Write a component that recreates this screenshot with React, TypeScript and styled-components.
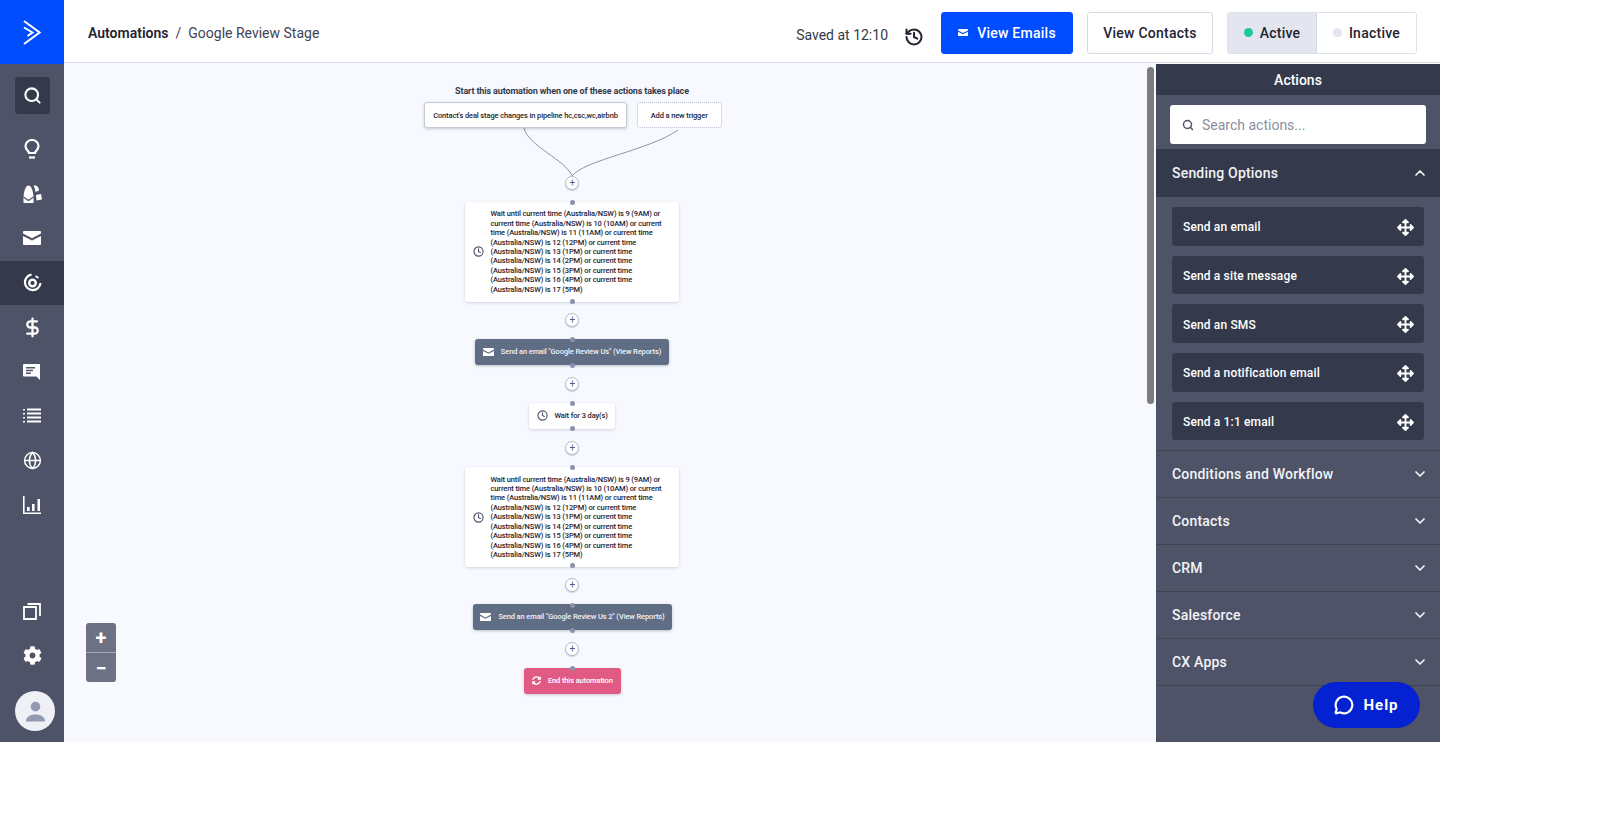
import { ReactNode } from "react";
import styled, { createGlobalStyle } from "styled-components";
import { ChevronDown, ChevronUp, Clock, DollarSign, Globe, History, MessageCircle, Search } from "lucide-react";
import { FaArrowsAlt, FaCog, FaSyncAlt } from "react-icons/fa";

const GlobalStyle = createGlobalStyle`
  html, body {
    margin: 0;
    padding: 0;
    background: #fff;
    font-family: Roboto, "Liberation Sans", sans-serif;
  }
  * { box-sizing: border-box; }
`;

const Shell = styled.div`
  display: flex;
  width: 1440px;
  height: 742px;
  overflow: hidden;
`;

const Nav = styled.nav`
  width: 64px;
  flex: none;
  display: flex;
  flex-direction: column;
  background: #4e5367;
  color: #fff;
`;
const Logo = styled.div`
  height: 64px;
  flex: none;
  background: #004cff;
  display: flex;
  align-items: center;
  justify-content: center;
`;
const NavItem = styled.div<{ $active?: boolean }>`
  height: 44.5px;
  flex: none;
  display: flex;
  align-items: center;
  justify-content: center;
  background: ${(p) => (p.$active ? "#343a4b" : "transparent")};
`;
const SearchBox = styled.div`
  width: 35px;
  height: 37px;
  flex: none;
  margin: 13px 0 13px 15px;
  border-radius: 3px;
  background: #343a4b;
  display: flex;
  align-items: center;
  justify-content: center;
`;
const NavSpacer = styled.div`
  flex: 1;
`;
const Avatar = styled.div`
  width: 40px;
  height: 40px;
  flex: none;
  margin: 13px 0 11px 15px;
  border-radius: 50%;
  background: #eef0f6;
  display: flex;
  align-items: center;
  justify-content: center;
`;

const Main = styled.div`
  flex: 1;
  display: flex;
  flex-direction: column;
  min-width: 0;
`;
const TopBar = styled.header`
  height: 63px;
  flex: none;
  display: flex;
  align-items: center;
  padding: 3px 23px 0 24px;
  border-bottom: 1px solid #d6dbe8;
  background: #fff;
`;
const Crumbs = styled.div`
  flex: 1;
  font-size: 14px;
  color: #3f4454;
`;
const CrumbRoot = styled.b`
  font-weight: 600;
  color: #1f2430;
`;
const CrumbSlash = styled.span`
  margin: 0 7px;
`;
const Saved = styled.span`
  font-size: 14px;
  color: #343a4b;
  margin: 4px 16px 0 0;
`;
const HistoryIcon = styled.span`
  display: flex;
  margin: 8px 17px 0 0;
  color: #1f2430;
`;
const Button = styled.button<{ $primary?: boolean }>`
  height: 42px;
  margin-right: 14px;
  padding: 0;
  display: flex;
  align-items: center;
  justify-content: center;
  gap: 9px;
  font: 500 14px Roboto, sans-serif;
  letter-spacing: 0.25px;
  border-radius: 3px;
  width: ${(p) => (p.$primary ? "132px" : "126px")};
  color: ${(p) => (p.$primary ? "#fff" : "#1f2430")};
  background: ${(p) => (p.$primary ? "#004cff" : "#fff")};
  border: 1px solid ${(p) => (p.$primary ? "#004cff" : "#d6dbe8")};
`;
const Toggle = styled.div`
  display: flex;
  height: 42px;
  border: 1px solid #dde1ec;
  border-radius: 3px;
  overflow: hidden;
`;
const ToggleOption = styled.div<{ $on?: boolean }>`
  display: flex;
  align-items: center;
  justify-content: center;
  gap: 7px;
  font-size: 14px;
  font-weight: 500;
  letter-spacing: 0.25px;
  color: #1f2430;
  width: ${(p) => (p.$on ? "89px" : "99px")};
  background: ${(p) => (p.$on ? "#e3e6ef" : "#fff")};
  border-right: ${(p) => (p.$on ? "1px solid #d6dbe8" : "none")};
`;
const Dot = styled.i<{ $on?: boolean }>`
  width: 9px;
  height: 9px;
  border-radius: 50%;
  background: ${(p) => (p.$on ? "#1fc9a0" : "#e3e6ef")};
`;

const Body = styled.div`
  flex: 1;
  display: flex;
  min-height: 0;
`;
const Canvas = styled.div`
  position: relative;
  flex: 1;
  background: #f7f9fe;
`;
const Wires = styled.svg`
  position: absolute;
  left: 0;
  top: 0;
`;
const Scrollbar = styled.div`
  position: absolute;
  left: 1083px;
  top: 4px;
  width: 7px;
  height: 337px;
  border-radius: 4px;
  background: #7b7b7b;
`;
const TriggerTitle = styled.div`
  position: absolute;
  left: 308px;
  top: 23px;
  width: 400px;
  text-align: center;
  font-size: 9px;
  font-weight: 700;
  letter-spacing: -0.14px;
  color: #343a4b;
`;
// x and y are page coordinates of the node on the diagram
const Node = styled.div<{ $x: number; $y: number; $w: number; $h: number }>`
  position: absolute;
  left: ${(p) => p.$x - 64}px;
  top: ${(p) => p.$y - 63}px;
  width: ${(p) => p.$w}px;
  height: ${(p) => p.$h}px;
  display: flex;
  align-items: center;
  border-radius: 3px;
  font-size: 7.5px;
  font-weight: 500;
  letter-spacing: -0.12px;
  line-height: 9.4px;
  white-space: nowrap;
  svg {
    flex: none;
  }
`;
const TriggerCard = styled(Node)`
  justify-content: center;
  background: #fff;
  border: 1px solid #c5c9d6;
  box-shadow: 0 1px 3px rgba(52, 58, 75, 0.25);
  color: #1f2430;
`;
const AddTrigger = styled(Node)`
  justify-content: center;
  background: #fff;
  border: 1px dotted #b6bacb;
  color: #1f2430;
`;
const WaitCard = styled(Node)`
  background: #fff;
  box-shadow: 0 1px 3px rgba(52, 58, 75, 0.2);
  color: #1f2430;
  padding-left: 7.5px;
  gap: 7px;
`;
const EmailCard = styled(Node)`
  justify-content: center;
  gap: 7px;
  background: #5f6d85;
  color: #f0f2f7;
  box-shadow: 0 1px 3px rgba(52, 58, 75, 0.3);
`;
const EndCard = styled(Node)`
  justify-content: center;
  gap: 7px;
  background: #e05a84;
  color: #fff;
  box-shadow: 0 1px 3px rgba(52, 58, 75, 0.25);
`;
const Pin = styled.i<{ $y: number }>`
  position: absolute;
  left: 505.8px;
  top: ${(p) => p.$y - 65.5}px;
  width: 5px;
  height: 5px;
  border-radius: 50%;
  background: #8b91ab;
`;
const AddStep = styled.div<{ $y: number }>`
  position: absolute;
  left: 501.3px;
  top: ${(p) => p.$y - 70}px;
  width: 14px;
  height: 14px;
  border-radius: 50%;
  background: #fff;
  border: 1px solid #b6bacb;
  box-shadow: 0 1px 1px rgba(52, 58, 75, 0.2);
  color: #5a6074;
  font-size: 10px;
  line-height: 11px;
  text-align: center;
`;
const ZoomControl = styled.div`
  position: absolute;
  left: 22px;
  top: 560px;
  width: 30px;
  border-radius: 3px;
  overflow: hidden;
  background: #6c7183;
`;
const ZoomButton = styled.div<{ $first?: boolean }>`
  height: 29.5px;
  padding-top: 2px;
  display: flex;
  align-items: center;
  justify-content: center;
  color: #fff;
  font-size: 20px;
  font-weight: 700;
  border-bottom: ${(p) => (p.$first ? "1px solid #a6aab8" : "none")};
`;

const Panel = styled.aside`
  width: 284px;
  flex: none;
  margin-top: 1px;
  position: relative;
  background: #4e5367;
  color: #fff;
`;
const PanelTitle = styled.div`
  height: 31px;
  padding-top: 1px;
  display: flex;
  align-items: center;
  justify-content: center;
  background: #343a4b;
  font-size: 14px;
  font-weight: 500;
`;
const SearchWrap = styled.div`
  height: 54px;
  padding: 10px 14px 5px;
`;
const SearchInput = styled.div`
  height: 39px;
  border-radius: 3px;
  background: #fff;
  display: flex;
  align-items: center;
  gap: 8px;
  padding-left: 12px;
  font-size: 14px;
  color: #8a8f9f;
`;
const GroupHead = styled.div<{ $open?: boolean }>`
  height: ${(p) => (p.$open ? "48px" : "47px")};
  display: flex;
  align-items: center;
  justify-content: space-between;
  padding: 0 12px 0 16px;
  font-size: 14px;
  font-weight: 500;
  letter-spacing: 0.2px;
  color: #f2f3f7;
  background: ${(p) => (p.$open ? "#343a4b" : "transparent")};
  border-bottom: ${(p) => (p.$open ? "none" : "1px solid #3f4456")};
`;
const GroupItems = styled.div`
  display: flex;
  flex-direction: column;
  gap: 10px;
  padding: 10px 16px 0;
  height: 254px;
  border-bottom: 1px solid #3f4456;
`;
const ActionRow = styled.div`
  height: 38.7px;
  flex: none;
  border-radius: 3px;
  background: #343a4b;
  display: flex;
  align-items: center;
  justify-content: space-between;
  padding: 2px 10px 0 11px;
  font-size: 12px;
  font-weight: 500;
  letter-spacing: 0.15px;
`;
const HelpButton = styled.div`
  position: absolute;
  left: 157px;
  top: 618px;
  width: 107px;
  height: 46px;
  border-radius: 23px;
  background: #0421d2;
  display: flex;
  align-items: center;
  justify-content: center;
  gap: 9px;
  font-size: 15px;
  font-weight: 700;
  letter-spacing: 1px;
`;

const LogoMark = () => (
  <svg width="18" height="25" viewBox="0 0 18 25" fill="none" stroke="#fff" strokeWidth="2">
    <path d="M1 1l15.500 11.500L1 24M1 7.500l8.500 5-5 3.500" />
  </svg>
);
const MailGlyph = ({ size = 18 }: { size?: number }) => (
  <svg width={size} height={(size * 14) / 18} viewBox="0 0 18 14" fill="#fff">
    <path d="M1 0h16a1 1 0 0 1 1 1v1.600l-9 4.600-9-4.600V1a1 1 0 0 1 1-1z" />
    <path d="M0 5l9 4.600L18 5v8a1 1 0 0 1-1 1H1a1 1 0 0 1-1-1z" />
  </svg>
);
const BulbGlyph = () => (
  <svg width="16" height="20" viewBox="0 0 16 20" fill="none" stroke="#fff" strokeWidth="2.200">
    <path d="M5 14c0-2-3.500-3-3.500-7a6.500 6 0 0 1 13 0c0 4-3.500 5-3.500 7z" />
    <path d="M5 18.500h6" />
  </svg>
);
const ContactsGlyph = () => (
  <svg width="19" height="18" viewBox="0 0 19 18">
    <path fill="#fff" d="M.5 18v-6C1 5 3 .5 5.500.5S10 5 10.500 12v6z" />
    <path fill="none" stroke="#4e5367" strokeWidth="1.200" d="M.5 12l5 3.500 5-3.500" />
    <path fill="#fff" d="M10.500.8c2.500-.8 5.500.5 5.500 4.700l-3.500 1.500C12 4 11.500 2.300 10.500.8zM13 10l5-1 1 5.500-5.500 1z" />
  </svg>
);
const TargetGlyph = () => (
  <svg width="19" height="19" viewBox="0 0 19 19" fill="none" stroke="#fff">
    <path strokeWidth="2.200" d="M8.500 1.600a7.800 7.800 0 1 0 9 8.400" />
    <circle cx="9.500" cy="10" r="3.300" strokeWidth="2.400" />
    <path strokeWidth="1.800" d="M12.500 3l3 2" />
  </svg>
);
const ChatGlyph = () => (
  <svg width="18" height="18" viewBox="0 0 18 18">
    <path fill="#fff" d="M1 1h16v16l-3.500-3.500H1a1 1 0 0 1-1-1V2a1 1 0 0 1 1-1z" />
    <path fill="#4e5367" d="M3 4h9v1.500H3zM3 6.800h7v1.500H3zM3 9.600h5v1.500H3z" />
  </svg>
);
const ListGlyph = () => (
  <svg width="18" height="16" viewBox="0 0 18 16" fill="#fff">
    <path d="M0 1h2v1.500H0zM0 5h2v1.500H0zM0 9h2v1.500H0zM0 13h2v1.500H0z" />
    <path d="M4 .5h14v2H4zM4 4.500h14v2H4zM4 8.500h14v2H4zM4 12.500h14v2H4z" />
  </svg>
);
const ChartGlyph = () => (
  <svg width="18" height="18" viewBox="0 0 18 18" fill="#fff">
    <path d="M0 0h1.600v16.400H18V18H0z" />
    <path d="M4 11h2.600v4H4zM9 8h2.600v7H9zM14.500 3H17v12h-2.500z" />
  </svg>
);
const PagesGlyph = () => (
  <svg width="18" height="18" viewBox="0 0 18 18" fill="none" stroke="#fff" strokeWidth="1.800">
    <path d="M1 5h12v12H1z" />
    <path d="M4.500 2H17v12" />
  </svg>
);
const UserGlyph = () => (
  <svg width="21" height="22" viewBox="0 0 24 24" fill="#9299b1">
    <circle cx="12" cy="7" r="5.500" />
    <path d="M1 24c0-5 5-8 11-8s11 3 11 8z" />
  </svg>
);

const WAIT_LINES = [
  "Wait until current time (Australia/NSW) is 9 (9AM) or",
  "current time (Australia/NSW) is 10 (10AM) or current",
  "time (Australia/NSW) is 11 (11AM) or current time",
  "(Australia/NSW) is 12 (12PM) or current time",
  "(Australia/NSW) is 13 (1PM) or current time",
  "(Australia/NSW) is 14 (2PM) or current time",
  "(Australia/NSW) is 15 (3PM) or current time",
  "(Australia/NSW) is 16 (4PM) or current time",
  "(Australia/NSW) is 17 (5PM)",
];

const WaitText = () => (
  <div>
    {WAIT_LINES.map((line) => (
      <div key={line}>{line}</div>
    ))}
  </div>
);

const navTop: { key: string; icon: ReactNode; active?: boolean }[] = [
  { key: "idea", icon: <BulbGlyph /> },
  { key: "contacts", icon: <ContactsGlyph /> },
  { key: "mail", icon: <MailGlyph /> },
  { key: "auto", icon: <TargetGlyph />, active: true },
  { key: "deals", icon: <DollarSign size={21} color="#fff" strokeWidth={2.6} /> },
  { key: "chat", icon: <ChatGlyph /> },
  { key: "lists", icon: <ListGlyph /> },
  { key: "site", icon: <Globe size={19} color="#fff" strokeWidth={1.8} /> },
  { key: "reports", icon: <ChartGlyph /> },
];

const ACTIONS = [
  "Send an email",
  "Send a site message",
  "Send an SMS",
  "Send a notification email",
  "Send a 1:1 email",
];
const GROUPS = ["Conditions and Workflow", "Contacts", "CRM", "Salesforce", "CX Apps"];
const PINS = [202.5, 301, 339.5, 365, 403.5, 428.5, 467, 565.7, 605, 630, 668.7];
const ADD_STEPS = [183, 320, 384, 447.7, 585.3, 649];

export default function App() {
  return (
    <>
      <GlobalStyle />
      <Shell>
        <Nav>
          <Logo>
            <LogoMark />
          </Logo>
          <SearchBox>
            <Search size={19} color="#fff" strokeWidth={2.6} />
          </SearchBox>
          {navTop.map((n) => (
            <NavItem key={n.key} $active={n.active}>
              {n.icon}
            </NavItem>
          ))}
          <NavSpacer />
          <NavItem>
            <PagesGlyph />
          </NavItem>
          <NavItem>
            <FaCog size={19} color="#fff" />
          </NavItem>
          <Avatar>
            <UserGlyph />
          </Avatar>
        </Nav>
        <Main>
          <TopBar>
            <Crumbs>
              <CrumbRoot>Automations</CrumbRoot>
              <CrumbSlash>/</CrumbSlash>
              Google Review Stage
            </Crumbs>
            <Saved>Saved at 12:10</Saved>
            <HistoryIcon>
              <History size={20} strokeWidth={2.4} />
            </HistoryIcon>
            <Button $primary>
              <MailGlyph size={10} />
              View Emails
            </Button>
            <Button>View Contacts</Button>
            <Toggle>
              <ToggleOption $on>
                <Dot $on />
                Active
              </ToggleOption>
              <ToggleOption>
                <Dot />
                Inactive
              </ToggleOption>
            </Toggle>
          </TopBar>
          <Body>
            <Canvas>
              <Wires width="1092" height="679" fill="none" stroke="#8e93a8" strokeWidth="1">
                <path d="M460 65C464 83 502 97 508 113" />
                <path d="M614 67C586 87 520 97 508 113" />
              </Wires>
              <Scrollbar />
              <TriggerTitle>Start this automation when one of these actions takes place</TriggerTitle>
              <TriggerCard $x={424.3} $y={102.3} $w={202.4} $h={26}>
                Contact's deal stage changes in pipeline hc,csc,wc,airbnb
              </TriggerCard>
              <AddTrigger $x={636.7} $y={102.3} $w={85} $h={26}>
                Add a new trigger
              </AddTrigger>
              <WaitCard $x={465} $y={201.7} $w={213.7} $h={100}>
                <Clock size={11} color="#4e5367" strokeWidth={2.4} />
                <WaitText />
              </WaitCard>
              <EmailCard $x={475} $y={339} $w={194} $h={26}>
                <MailGlyph size={11} />
                Send an email "Google Review Us" (View Reports)
              </EmailCard>
              <WaitCard $x={529} $y={402.7} $w={86} $h={26}>
                <Clock size={11} color="#4e5367" strokeWidth={2.4} />
                Wait for 3 day(s)
              </WaitCard>
              <WaitCard $x={465} $y={467} $w={213.7} $h={100}>
                <Clock size={11} color="#4e5367" strokeWidth={2.4} />
                <WaitText />
              </WaitCard>
              <EmailCard $x={472.7} $y={604.3} $w={199.6} $h={25.7}>
                <MailGlyph size={11} />
                Send an email "Google Review Us 2" (View Reports)
              </EmailCard>
              <EndCard $x={523.7} $y={667.7} $w={97.3} $h={26}>
                <FaSyncAlt size={9} />
                End this automation
              </EndCard>
              {ADD_STEPS.map((y) => (
                <AddStep key={y} $y={y}>
                  +
                </AddStep>
              ))}
              {PINS.map((y) => (
                <Pin key={y} $y={y} />
              ))}
              <ZoomControl>
                <ZoomButton $first>+</ZoomButton>
                <ZoomButton>−</ZoomButton>
              </ZoomControl>
            </Canvas>
            <Panel>
              <PanelTitle>Actions</PanelTitle>
              <SearchWrap>
                <SearchInput>
                  <Search size={12} color="#4e5367" strokeWidth={3} />
                  Search actions...
                </SearchInput>
              </SearchWrap>
              <GroupHead $open>
                Sending Options
                <ChevronUp size={16} strokeWidth={2.6} />
              </GroupHead>
              <GroupItems>
                {ACTIONS.map((a) => (
                  <ActionRow key={a}>
                    {a}
                    <FaArrowsAlt size={17} />
                  </ActionRow>
                ))}
              </GroupItems>
              {GROUPS.map((g) => (
                <GroupHead key={g}>
                  {g}
                  <ChevronDown size={16} strokeWidth={2.6} />
                </GroupHead>
              ))}
              <HelpButton>
                <MessageCircle size={20} strokeWidth={2.6} />
                Help
              </HelpButton>
            </Panel>
          </Body>
        </Main>
      </Shell>
    </>
  );
}
